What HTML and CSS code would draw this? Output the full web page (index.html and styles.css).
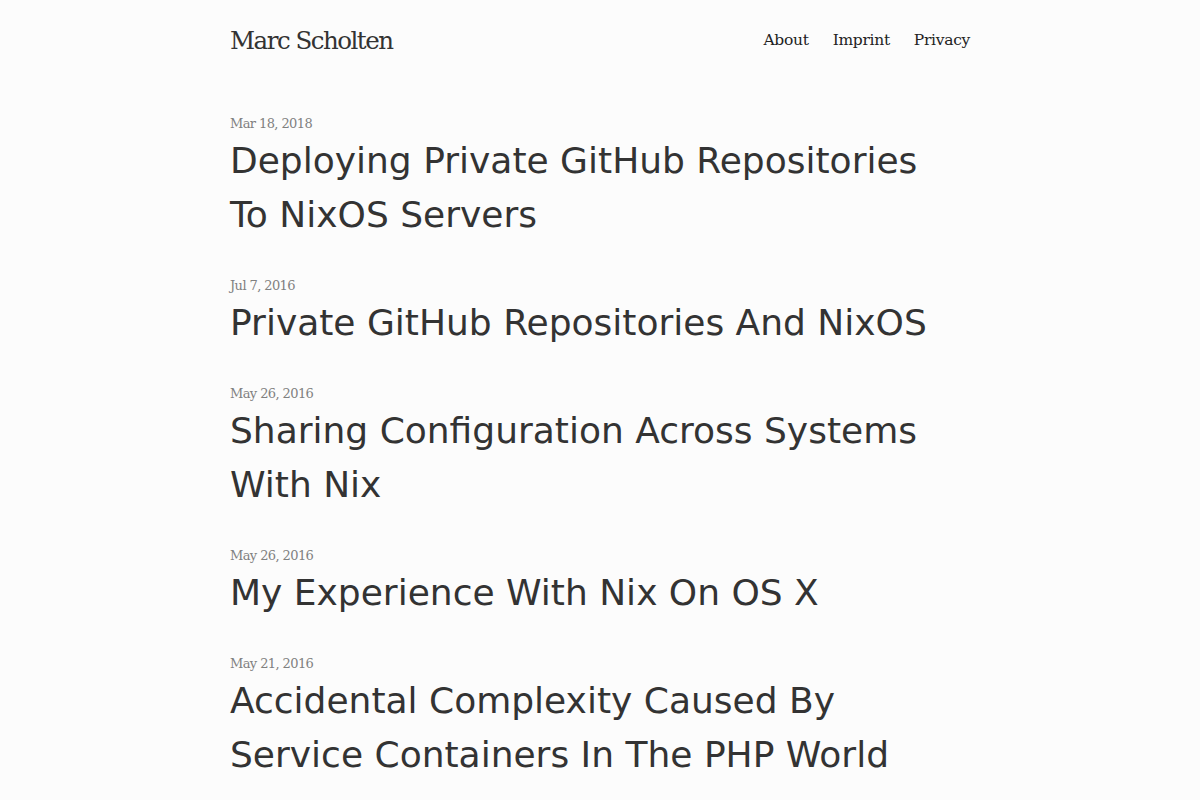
FILE: index.html
```html
<!DOCTYPE html>
<html lang="en">
<head>
<meta charset="utf-8">
<title>Marc Scholten</title>
<link rel="stylesheet" href="styles.css">
</head>
<body>
<div class="page">
  <header class="site-header">
    <a class="brand" href="#">Marc Scholten</a>
    <nav class="nav">
      <a href="#">About</a>
      <a href="#">Imprint</a>
      <a href="#">Privacy</a>
    </nav>
  </header>
  <main class="posts">
    <article class="post">
      <div class="date">Mar 18, 2018</div>
      <h2 class="title">Deploying Private GitHub Repositories To NixOS Servers</h2>
    </article>
    <article class="post">
      <div class="date">Jul 7, 2016</div>
      <h2 class="title">Private GitHub Repositories And NixOS</h2>
    </article>
    <article class="post">
      <div class="date">May 26, 2016</div>
      <h2 class="title">Sharing Configuration Across Systems With Nix</h2>
    </article>
    <article class="post">
      <div class="date">May 26, 2016</div>
      <h2 class="title">My Experience With Nix On OS X</h2>
    </article>
    <article class="post">
      <div class="date">May 21, 2016</div>
      <h2 class="title">Accidental Complexity Caused By Service Containers In The PHP World</h2>
    </article>
  </main>
</div>
</body>
</html>
```

FILE: styles.css
```css
html, body {
  margin: 0;
  padding: 0;
  background: #fcfcfc;
  color: #333;
}
.page {
  width: 740px;
  margin: 0 auto;
}
.site-header {
  display: flex;
  justify-content: space-between;
  align-items: center;
  height: 80px;
}
.brand {
  font-family: "DejaVu Serif", serif;
  font-size: 24.5px;
  letter-spacing: -1.5px;
  color: #333;
  text-decoration: none;
}
.nav {
  display: flex;
  gap: 24px;
}
.nav a {
  font-family: "DejaVu Serif", serif;
  font-size: 15.5px;
  letter-spacing: -0.3px;
  color: #222;
  text-decoration: none;
}
.posts {
  padding-top: 32px;
  display: flex;
  flex-direction: column;
  gap: 32px;
}
.date {
  font-family: "DejaVu Serif", serif;
  font-size: 13px;
  line-height: 22px;
  color: #808080;
  letter-spacing: -0.6px;
  padding-top: 1px;
  margin-bottom: -1px;
}
.title {
  margin: 0;
  font-family: "DejaVu Sans", sans-serif;
  font-weight: normal;
  font-size: 36px;
  line-height: 54px;
  color: #333;
  width: 710px;
}
```
